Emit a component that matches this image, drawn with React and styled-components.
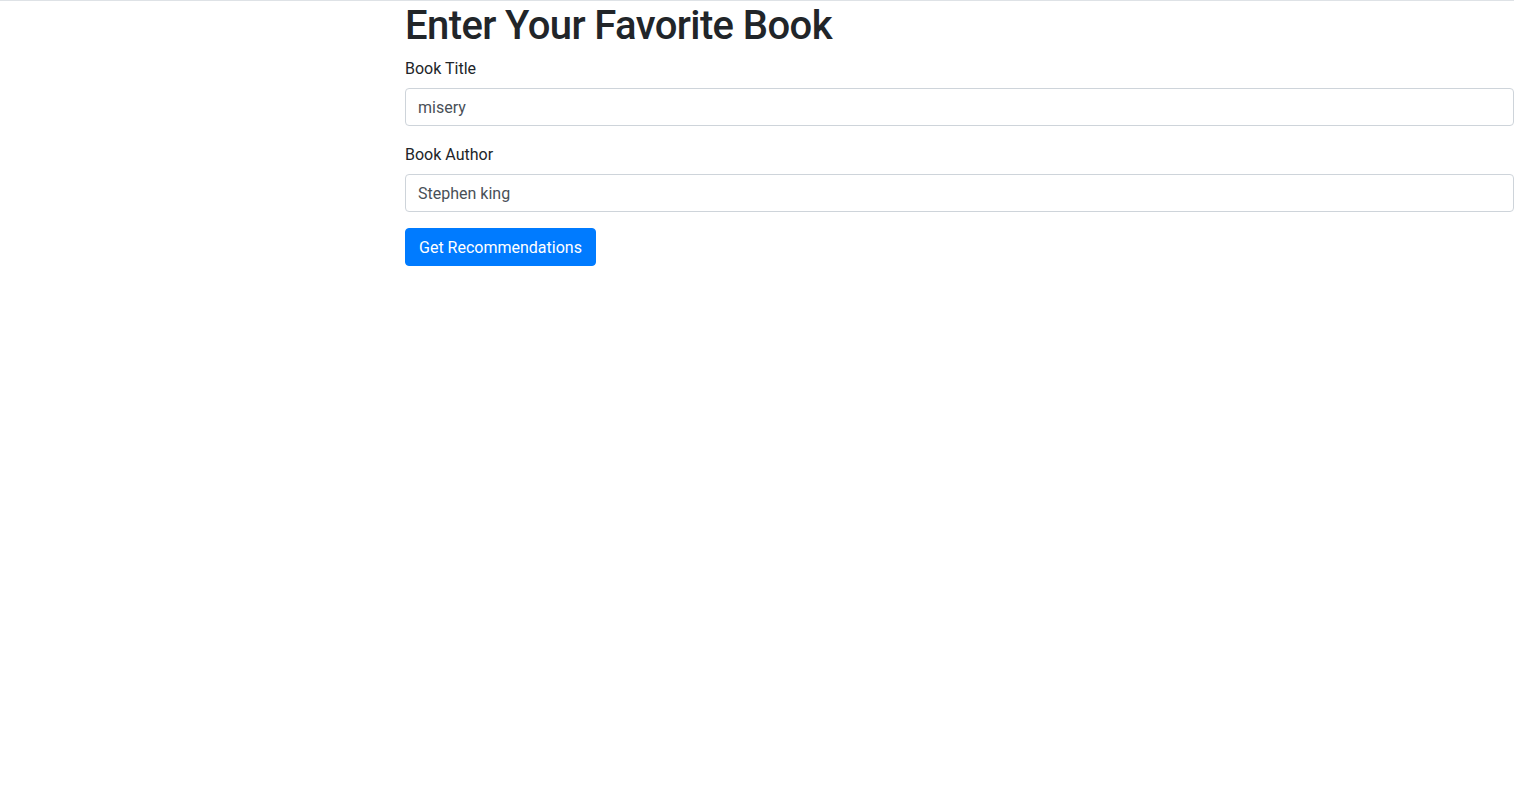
import React, { useState } from 'react';
import styled, { createGlobalStyle } from 'styled-components';

const GlobalStyle = createGlobalStyle`
  html, body {
    margin: 0;
    padding: 0;
    background: #fff;
    overflow: hidden;
  }
  body {
    font-family: Roboto, "Liberation Sans", Arial, sans-serif;
    font-size: 16px;
    line-height: 1.5;
    color: #212529;
  }
  * {
    box-sizing: border-box;
  }
`;

const Page = styled.div`
  display: flex;
  width: 1514px;
  min-height: 787px;
  box-shadow: inset 0 1px 0 #dee2e6;
`;

const Side = styled.div`
  flex: 0 0 405px;
`;

const Main = styled.div`
  flex: 1;
  min-width: 0;
`;

const Title = styled.h1`
  margin: 0 0 8px;
  padding-top: 2px;
  height: 48px;
  font-size: 40px;
  font-weight: 500;
  line-height: 1.2;
  letter-spacing: -0.6px;
`;

const FormGroup = styled.div`
  margin-bottom: 16px;
`;

const Label = styled.label`
  display: inline-block;
  padding-top: 1px;
  margin-bottom: 7px;
`;

const Input = styled.input`
  display: block;
  width: 100%;
  height: 38px;
  padding: 6px 12px;
  font-family: inherit;
  font-size: 16px;
  line-height: 1.5;
  color: #495057;
  background: #fff;
  border: 1px solid #ced4da;
  border-radius: 4px;
  outline: none;
`;

const Button = styled.button`
  display: inline-block;
  padding: 7px 13px 5px;
  font-family: inherit;
  font-size: 16px;
  line-height: 1.5;
  font-weight: 400;
  color: #fff;
  background: #007bff;
  border: 1px solid #007bff;
  border-radius: 4px;
  cursor: pointer;
`;

export default function App() {
  const [title, setTitle] = useState('misery');
  const [author, setAuthor] = useState('Stephen king');

  return (
    <>
      <GlobalStyle />
      <Page>
        <Side />
        <Main>
          <Title>Enter Your Favorite Book</Title>
          <form onSubmit={(e) => e.preventDefault()}>
            <FormGroup>
              <Label htmlFor="title">Book Title</Label>
              <Input id="title" value={title} onChange={(e) => setTitle(e.target.value)} />
            </FormGroup>
            <FormGroup>
              <Label htmlFor="author">Book Author</Label>
              <Input id="author" value={author} onChange={(e) => setAuthor(e.target.value)} />
            </FormGroup>
            <Button type="submit">Get Recommendations</Button>
          </form>
        </Main>
      </Page>
    </>
  );
}
